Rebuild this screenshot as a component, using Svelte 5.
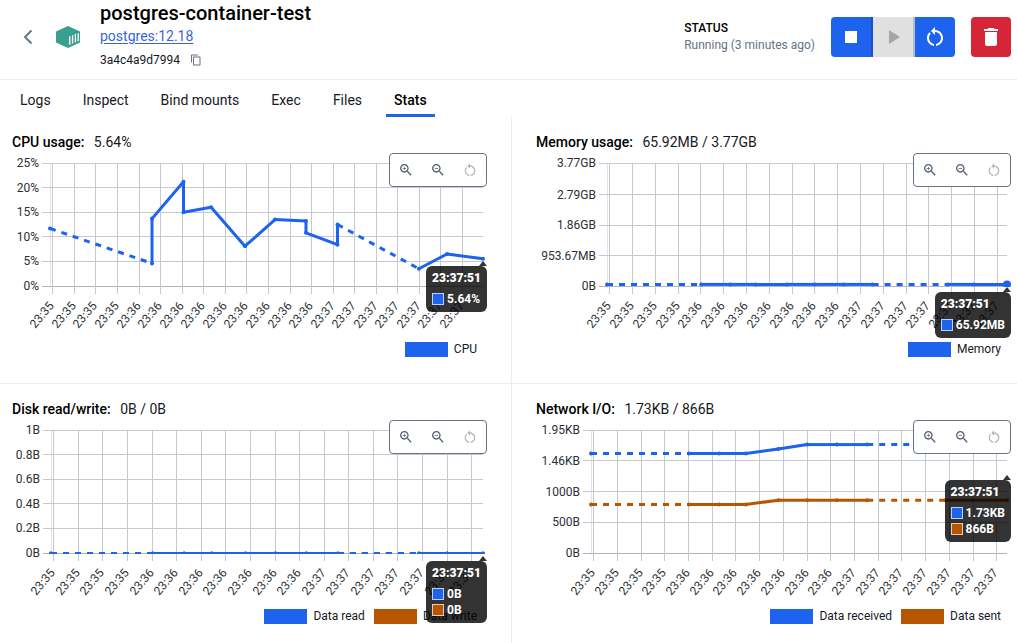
<script>
  const times = [0, 0.2356, 0.3083, 0.372, 0.4503, 0.5196, 0.5912, 0.664, 0.852, 0.917, 1];
  const at = (values) => values.map((v, i) => [times[i], v]);
  const flat = (v) => at(times.map(() => v));

  const BLUE = '#1d63ed';
  const BROWN = '#b75501';
  const TOP = 10;
  const BOTTOM = 133;
  const RIGHT_INSET = 4;

  const charts = [
    {
      id: 'cpu', title: 'CPU usage:', value: '5.64%', left: 38, max: 25,
      ticks: [[25, '25%'], [20, '20%'], [15, '15%'], [10, '10%'], [5, '5%'], [0, '0%']],
      labels: [4, 9, 7], step: 0.0498,
      series: [{
        name: 'CPU', color: BLUE, shown: '5.64%',
        points: [[0, 11.8], [0.2356, 4.7], [0.2356, 13.8], [0.3083, 21.3], [0.3083, 15.1], [0.372, 16.1], [0.4503, 8.2],
          [0.5196, 13.6], [0.5912, 13.3], [0.5912, 10.9], [0.664, 8.5], [0.664, 12.6], [0.852, 3.6], [0.917, 6.6], [1, 5.64]]
      }],
      tipTop: 113
    },
    {
      id: 'memory', title: 'Memory usage:', value: '65.92MB / 3.77GB', left: 71, max: 3.77,
      ticks: [[3.77, '3.77GB'], [2.79, '2.79GB'], [1.86, '1.86GB'], [0.93, '953.67MB'], [0, '0B']],
      labels: [4, 7, 7], step: 0.057,
      series: [{ name: 'Memory', color: BLUE, shown: '65.92MB', points: flat(0.0644), active: true }],
      tipTop: 139
    },
    {
      id: 'disk', title: 'Disk read/write:', value: '0B / 0B', left: 39, max: 1,
      ticks: [[1, '1B'], [0.8, '0.8B'], [0.6, '0.6B'], [0.4, '0.4B'], [0.2, '0.2B'], [0, '0B']],
      labels: [4, 7, 7], step: 0.0569,
      series: [
        { name: 'Data read', color: BLUE, shown: '0B', points: flat(0) },
        { name: 'Data write', color: BROWN, shown: '0B', points: flat(0) }
      ],
      tipTop: 141
    },
    {
      id: 'network', title: 'Network I/O:', value: '1.73KB / 866B', left: 55, max: 2000,
      ticks: [[2000, '1.95KB'], [1500, '1.46KB'], [1000, '1000B'], [500, '500B'], [0, '0B']],
      labels: [4, 7, 7], step: 0.057,
      series: [
        { name: 'Data received', color: BLUE, shown: '1.73KB', points: at([1626, 1626, 1626, 1626, 1700, 1771, 1771, 1771, 1771, 1771, 1771]) },
        { name: 'Data sent', color: BROWN, shown: '866B', points: at([797, 797, 797, 797, 866, 866, 866, 866, 866, 866, 866]) }
      ],
      tipTop: 60
    }
  ];

  const tabs = ['Logs', 'Inspect', 'Bind mounts', 'Exec', 'Files', 'Stats'];
  let active = $state('Stats');
  let widths = $state([475, 475, 475, 475]);

  const xOf = (c, w, t) => c.left + t * (w - RIGHT_INSET - c.left);
  const yOf = (c, v) => BOTTOM - (v / c.max) * (BOTTOM - TOP);
  const crisp = (n) => Math.round(n) + 0.5;
  const xLabels = (c) => c.labels.flatMap((n, i) => Array(n).fill('23:3' + (5 + i)));
  // Spans with no polled samples are drawn dashed.
  const isGap = (a, b) => (a[0] === 0 && b[0] === 0.2356) || (a[0] === 0.664 && b[0] === 0.852);
  const segments = (points) => points.slice(1).map((b, i) => ({ a: points[i], b, dashed: isGap(points[i], b) }));

  const lens = 'M15.5 14h-.79l-.28-.27C15.41 12.59 16 11.11 16 9.5 16 5.91 13.09 3 9.5 3S3 5.91 3 9.5 5.91 16 9.5 16c1.61 0 3.09-.59 4.23-1.57l.27.28v.79l5 4.99L20.49 19l-4.99-5zm-6 0C7.01 14 5 11.99 5 9.5S7.01 5 9.5 5 14 7.01 14 9.5 11.99 14 9.5 14z';
  const restart = 'M12 5V2L8 6l4 4V7c3.31 0 6 2.69 6 6 0 2.97-2.17 5.43-5 5.91v2.02c3.95-.49 7-3.85 7-7.93 0-4.42-3.58-8-8-8zm-6 8c0-1.65.67-3.15 1.76-4.24L6.34 7.34C4.9 8.79 4 10.79 4 13c0 4.08 3.05 7.44 7 7.93v-2.02c-2.83-.48-5-2.94-5-5.91z';
</script>

<div class="page">
  <header>
    <button class="back" aria-label="Back">
      <svg width="24" height="24" viewBox="0 0 24 24"><path d="M15.500 5.500L9 12l6.500 6.500" fill="none" stroke="#677285" stroke-width="1.900" /></svg>
    </button>
    <svg class="logo" width="24" height="22" viewBox="0 0 24 22">
      <path d="M12 0l12 5.500v11L12 22 0 16.500v-11z" fill="#3b9f8f" />
      <path d="M13.800 10.300v8.400M16.600 9.200v8.200M19.400 8.100v8.100M22.200 7.200v8" stroke="#fff" stroke-width="1.300" />
    </svg>
    <div class="info">
      <h1>postgres-container-test</h1>
      <a href="#image">postgres:12.18</a>
      <div class="hash">
        <span>3a4c4a9d7994</span>
        <button aria-label="Copy container ID">
          <svg width="12" height="12" viewBox="0 0 24 24"><path fill="#677285" d="M16 1H4c-1.100 0-2 .9-2 2v14h2V3h12V1zm3 4H8c-1.100 0-2 .9-2 2v14c0 1.100.9 2 2 2h11c1.100 0 2-.9 2-2V7c0-1.100-.9-2-2-2zm0 16H8V7h11v14z" /></svg>
        </button>
      </div>
    </div>
    <div class="status">
      <strong>STATUS</strong>
      <span>Running (3 minutes ago)</span>
    </div>
    <div class="group">
      <button class="stop" aria-label="Stop"><svg width="24" height="24" viewBox="0 0 24 24"><path d="M6 6h12v12H6z" /></svg></button>
      <button class="start" aria-label="Start" disabled><svg width="24" height="24" viewBox="0 0 24 24"><path d="M8 5v14l11-7z" /></svg></button>
      <button aria-label="Restart"><svg width="24" height="24" viewBox="0 0 24 24"><path d={restart} /></svg></button>
    </div>
    <button class="delete" aria-label="Delete">
      <svg width="24" height="24" viewBox="0 0 24 24"><path d="M6 19c0 1.100.9 2 2 2h8c1.100 0 2-.9 2-2V7H6v12zM19 4h-3.500l-1-1h-5l-1 1H5v2h14V4z" /></svg>
    </button>
  </header>

  <nav>
    {#each tabs as tab}
      <button class:active={tab === active} onclick={() => (active = tab)}>{tab}</button>
    {/each}
  </nav>

  <main>
    {#each charts as c, n}
      {@const w = widths[n]}
      <section>
        <h2>{c.title} <span>{c.value}</span></h2>
        <div class="chart" bind:clientWidth={widths[n]}>
          <svg class="plot" width="100%" height="182" role="img" aria-label={c.title}>
            <clipPath id={'area-' + c.id}><rect x={c.left - 3} y="0" width={Math.max(0, w - c.left + 3)} height={BOTTOM + 1} /></clipPath>
            <line class="edge" x1={c.left + 0.5} x2={c.left + 0.5} y1={TOP} y2={BOTTOM} />
            {#each c.ticks as [v, label]}
              <line class="grid" class:base={v === 0} x1={c.left - 8} x2={w - RIGHT_INSET} y1={crisp(yOf(c, v) - 0.5)} y2={crisp(yOf(c, v) - 0.5)} />
              <text class="tick" x={c.left - 11} y={Math.round(yOf(c, v)) + 4} text-anchor="end">{label}</text>
            {/each}
            {#each xLabels(c) as label, i}
              {@const x = crisp(xOf(c, w, 0.0065 + i * c.step) - 0.5)}
              <line class="grid" x1={x} x2={x} y1={TOP} y2={BOTTOM + 8} />
              <text class="tick" transform={`translate(${x + 2} ${BOTTOM + 20}) rotate(-50)`} text-anchor="end">{label}</text>
            {/each}
            <g clip-path={`url(#area-${c.id})`}>
              {#each [...c.series].reverse() as s}
                {#each segments(s.points) as seg}
                  <line
                    x1={xOf(c, w, seg.a[0])} y1={yOf(c, seg.a[1]) + 0.5}
                    x2={xOf(c, w, seg.b[0])} y2={yOf(c, seg.b[1]) + 0.5}
                    stroke={s.color} stroke-width="3" stroke-dasharray={seg.dashed ? '6 6' : null} />
                {/each}
                {#each s.points as p}
                  <circle cx={xOf(c, w, p[0])} cy={yOf(c, p[1]) + 0.5} r={s.active && p[0] === 1 ? 4 : 2} fill={s.color} />
                {/each}
              {/each}
            </g>
          </svg>

          <ul class="legend">
            {#each c.series as s}
              <li><i style:background={s.color}></i>{s.name}</li>
            {/each}
          </ul>

          <div class="tools">
            <button aria-label="Zoom in"><svg width="16" height="16" viewBox="0 0 24 24"><path d={lens + 'M12 10h-2v2H9v-2H7V9h2V7h1v2h2v1z'} /></svg></button>
            <button aria-label="Zoom out"><svg width="16" height="16" viewBox="0 0 24 24"><path d={lens + 'M7 9h5v1H7z'} /></svg></button>
            <button aria-label="Reset zoom" disabled><svg width="16" height="16" viewBox="0 0 24 24"><path d={restart} /></svg></button>
          </div>

          <div class="tip" style:top={c.tipTop + 'px'}>
            <b>23:37:51</b>
            {#each c.series as s}
              <span><i style:background={s.color}></i>{s.shown}</span>
            {/each}
          </div>
        </div>
      </section>
    {/each}
  </main>
</div>

<style>
  :global(body) { margin: 0; background: #fff; }
  .page {
    display: flex;
    flex-direction: column;
    min-height: 100vh;
    font: 14px/20px Roboto, sans-serif;
    color: #17191e;
  }
  button { border: 0; padding: 0; margin: 0; background: none; font: inherit; color: inherit; cursor: pointer; }
  button svg { display: block; fill: currentColor; }
  button:disabled { cursor: default; }

  header {
    display: flex;
    align-items: center;
    padding: 0 6px 5px 16px;
    border-bottom: 1px solid #ebecef;
  }
  .logo { margin: 0 20px 0 16px; }
  .info { display: flex; flex-direction: column; align-items: flex-start; padding: 1px 0 6px; }
  h1 { margin: 0 0 1px; font-size: 20px; line-height: 24px; font-weight: 500; color: #000; }
  a { color: #3c63dc; text-underline-offset: 2px; }
  .hash { display: flex; align-items: center; gap: 10px; margin-top: 6px; font-size: 12px; line-height: 16px; }
  .status { display: flex; flex-direction: column; margin: 0 16px 0 auto; font-size: 12px; line-height: 17px; color: #677285; }
  .status strong { font-weight: 500; color: #000; }
  .group { display: flex; margin-right: 16px; border-radius: 4px; overflow: hidden; }
  .group button, .delete {
    display: grid;
    place-items: center;
    width: 40px;
    height: 40px;
    background: #1d63ed;
    color: #fff;
  }
  .group .stop { width: 42px; box-sizing: border-box; border-right: 2px solid #1a4fbd; }
  .group .start { width: 42px; box-sizing: border-box; border-right: 2px solid #b9bdc6; background: #e0e0e0; color: #a6a6a6; }
  .delete { border-radius: 4px; background: #d52536; }

  nav { display: flex; gap: 16px; padding: 0 12px; }
  nav button { padding: 10px 8px 4px; border-bottom: 3px solid transparent; color: #17191e; }
  nav .active { border-color: #1d63ed; font-weight: 500; color: #000; }

  main {
    flex: 1;
    display: grid;
    grid-template-columns: minmax(0, 512fr) minmax(0, 505fr);
    grid-template-rows: auto 1fr;
  }
  section { padding: 16px 6px 18px 24px; }
  section:nth-child(odd) { padding: 16px 24px 18px 12px; border-right: 1px solid #ebecef; }
  section:nth-child(-n + 2) { padding-bottom: 26px; border-bottom: 1px solid #ebecef; }
  h2 { margin: 0 0 2px; font-size: 14px; line-height: 18px; font-weight: 500; color: #000; }
  h2 span { margin-left: 6px; font-weight: 400; color: #17191e; }

  .chart { position: relative; }
  .plot { display: block; }
  .grid { stroke: #c4c8d1; }
  .base { stroke: #afb3bc; }
  .edge { stroke: #e1e3e8; }
  .tick { font-size: 12px; fill: #2b2f36; }

  .legend {
    display: flex;
    justify-content: flex-end;
    gap: 9px;
    margin: 0;
    padding: 7px 10px 0 0;
    list-style: none;
    font-size: 12px;
    line-height: 15px;
  }
  .legend li { display: flex; gap: 6px; }
  .legend i { width: 43px; height: 15px; }

  .tools {
    position: absolute;
    top: 0;
    right: 0;
    display: flex;
    border: 1px solid #677285;
    border-radius: 4px;
    background: #fff;
    color: #556074;
  }
  .tools button { display: grid; place-items: center; width: 32px; height: 32px; }
  .tools button:disabled { color: #b5b9c0; }

  .tip {
    position: absolute;
    right: 0;
    padding: 5px 6px;
    border-radius: 6px;
    background: rgba(0, 0, 0, 0.8);
    color: #fff;
    font-size: 12px;
    font-weight: 700;
    line-height: 16px;
  }
  .tip::before {
    content: '';
    position: absolute;
    right: 0;
    top: -5px;
    border: solid transparent;
    border-width: 0 4px 5px;
    border-bottom-color: rgba(0, 0, 0, 0.8);
  }
  .tip b { display: block; margin-bottom: 6px; line-height: 14px; }
  .tip span { display: flex; align-items: center; gap: 3px; }
  .tip i { width: 10px; height: 10px; border: 1px solid rgba(255, 255, 255, 0.7); background-clip: padding-box; }
</style>
